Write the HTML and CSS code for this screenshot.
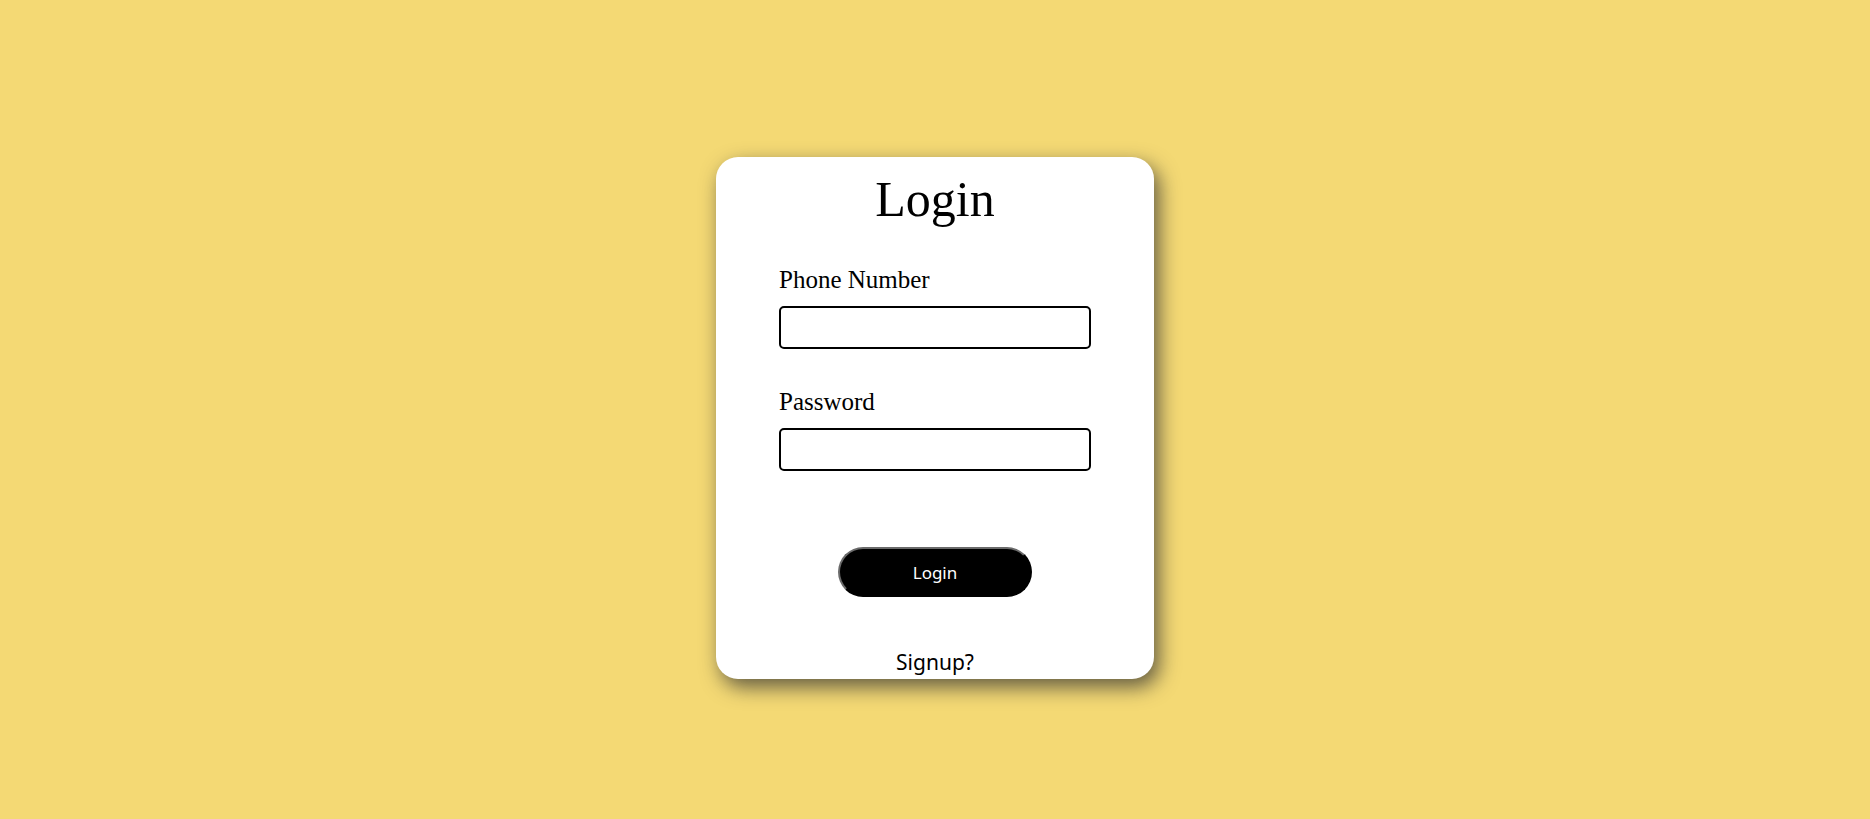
FILE: index.html
```
<!DOCTYPE html>
<html lang="en">
<head>
<meta charset="utf-8">
<title>Login</title>
<link rel="stylesheet" href="styles.css">
</head>
<body>
<main class="card">
  <h1 class="title">Login</h1>
  <form class="form">
    <label class="label" for="phone">Phone Number</label>
    <input class="input" id="phone" type="text">
    <label class="label label-2" for="pass">Password</label>
    <input class="input" id="pass" type="password">
    <button class="btn" type="button">Login</button>
  </form>
  <a class="signup">Signup?</a>
</main>
</body>
</html>
```
FILE: styles.css
```
html, body {
  margin: 0;
  padding: 0;
}
body {
  background: #f4d974;
  min-height: 819px;
  display: flex;
  flex-direction: column;
  align-items: center;
}
.card {
  box-sizing: border-box;
  margin-top: 157px;
  width: 438px;
  height: 522px;
  background: #fff;
  border-radius: 22px;
  box-shadow: 5px 8px 20px rgba(50, 50, 50, 0.75);
  padding-top: 14px;
  display: flex;
  flex-direction: column;
  align-items: center;
}
.title {
  margin: 0;
  font-family: "Liberation Serif", "Times New Roman", serif;
  font-weight: normal;
  font-size: 50px;
  line-height: 57px;
  color: #000;
}
.form {
  margin-top: 37px;
  width: 312px;
  display: flex;
  flex-direction: column;
}
.label {
  font-family: "Liberation Serif", "Times New Roman", serif;
  font-size: 25px;
  line-height: 29px;
  color: #000;
}
.label-2 {
  margin-top: 38px;
}
.input {
  box-sizing: border-box;
  margin: 12px 0 0 0;
  width: 312px;
  height: 43px;
  border: 2px solid #000;
  border-radius: 5px;
  background: #fff;
  outline: none;
  padding: 0 8px;
}
.btn {
  box-sizing: border-box;
  align-self: center;
  margin-top: 76px;
  width: 194px;
  height: 50px;
  border-radius: 25px;
  background: #000;
  color: #fff;
  border: 2px solid #000;
  border-top-color: #6a6a6a;
  border-left-color: #6a6a6a;
  font-family: "Noto Sans", "Open Sans", sans-serif;
  font-size: 17px;
  padding: 0;
}
.signup {
  margin-top: 52px;
  font-family: "Noto Sans", "Open Sans", sans-serif;
  font-size: 21px;
  line-height: 27px;
  color: #000;
}
```
